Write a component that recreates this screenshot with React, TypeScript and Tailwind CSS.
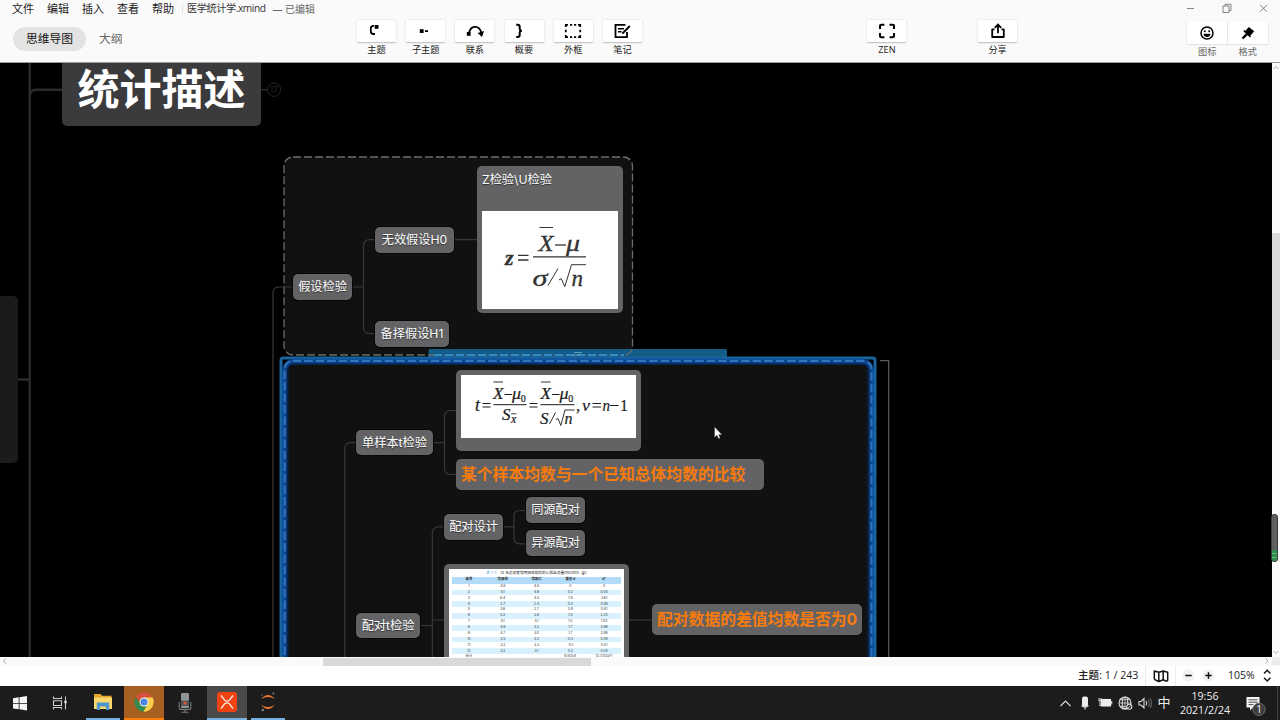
import type { ReactNode } from "react";

const menus = ["文件", "编辑", "插入", "查看", "帮助"];

const rows = [
  ["1", "4.8", "4.8", "0", "0"],
  ["2", "5.1", "4.9", "0.2", "0.04"],
  ["3", "6.4", "4.5", "1.9", "3.61"],
  ["4", "2.7", "2.4", "0.3", "0.09"],
  ["5", "3.6", "2.7", "0.9", "0.81"],
  ["6", "5.3", "3.8", "1.5", "2.25"],
  ["7", "5.1", "4.1", "1.0", "1.00"],
  ["8", "4.9", "3.2", "1.7", "2.89"],
  ["9", "4.7", "3.0", "1.7", "2.89"],
  ["10", "3.5", "3.2", "0.3", "0.09"],
  ["11", "3.2", "3.3", "-0.1", "0.01"],
  ["12", "3.3", "3.1", "0.2", "0.04"],
  ["合计", "", "", "9.5(Σd)", "12.73(Σd²)"],
];

function Tool({ label, children }: { label: string; children: ReactNode }) {
  return (
    <div className="flex w-[49.2px] shrink-0 flex-col items-center pt-[19.5px]">
      <div className="flex h-[22px] w-[39px] items-center justify-center rounded-[1px] bg-white shadow-[0_0.5px_1.5px_rgba(0,0,0,0.25)]">
        <svg width="20" height="20" viewBox="0 0 20 20" fill="none" stroke="#000" strokeWidth="1.8">
          {children}
        </svg>
      </div>
      <span className="mt-[2.5px] text-[9.2px] leading-[12px] whitespace-nowrap text-[#222]">{label}</span>
    </div>
  );
}

function Header() {
  return (
    <header className="flex h-[63px] shrink-0 border-b border-[#9a9a9a] bg-[#fafafa]">
      <div className="w-[351.9px] shrink-0">
        <div className="flex h-[18px] items-center pl-3 text-[11px] whitespace-nowrap text-[#1a1a1a]">
          {menus.map((m) => (
            <span key={m} className="w-[35px]">{m}</span>
          ))}
          <span className="-ml-[5px] h-[10px] w-px bg-[#e4e4e4]" />
          <span className="ml-[4px] text-[10.2px] tracking-[-0.45px] text-[#333]">医学统计学.xmind</span>
          <span className="ml-[7px] text-[10px] text-[#666]">— 已编辑</span>
        </div>
        <div className="mt-[9px] flex h-6 items-center pl-[13px] text-[11.8px]">
          <span className="flex h-6 w-[73px] items-center justify-center rounded-full bg-[#e3e3e3] text-[#111]">思维导图</span>
          <span className="ml-[13px] text-[#666]">大纲</span>
        </div>
      </div>
      <Tool label="主题">
        <path d="M8 4.8 H7.5 Q4.8 4.8 4.8 7.5 V10.3 Q4.8 13 7.5 13 H9" />
        <rect x="8.7" y="4" width="3.8" height="3.8" fill="#000" stroke="none" />
      </Tool>
      <Tool label="子主题">
        <rect x="3.8" y="8.2" width="3.8" height="3.8" fill="#000" stroke="none" />
        <path d="M9 10.1 h3" />
      </Tool>
      <Tool label="联系">
        <path d="M4 13 C5 3.8 14.5 3.8 16.3 12" />
        <rect x="1.8" y="11" width="3.8" height="3.8" fill="#000" stroke="none" />
        <path d="M12.6 12 L19 10 L17 16 Z" fill="#000" stroke="none" />
      </Tool>
      <Tool label="概要">
        <path d="M2.2 3.8 H3.7 Q5.7 3.8 5.7 5.8 V7.8 Q5.7 9.8 7.9 9.8 Q5.7 9.8 5.7 11.8 V14 Q5.7 16 3.7 16 H2.2" strokeWidth="2" />
      </Tool>
      <Tool label="外框">
        <path d="M2.8 6 V3.8 H5 M7 3.8 h2.2 M11 3.8 h2.2 M15 3.8 h2.2 V6 M17.2 8.7 v2.6 M17.2 14 V16.2 H15 M13.2 16.2 h-2.2 M9.2 16.2 h-2.2 M5 16.2 H2.8 V14 M2.8 11.3 V8.7" />
      </Tool>
      <Tool label="笔记">
        <path d="M13.5 3.8 H3.5 V16.2 H15 V11" />
        <path d="M6 7.7 h6 M6 10.8 h3.5" strokeWidth="1.4" />
        <path d="M10.3 12.6 L17.8 5" strokeWidth="2" />
      </Tool>
      <div className="w-[215.3px] shrink-0" />
      <Tool label="ZEN">
        <path d="M3 8 V5 Q3 3.8 4.2 3.8 H7.4 M12.6 3.8 H15.8 Q17 3.8 17 5 V8 M17 12 V15 Q17 16.2 15.8 16.2 H12.6 M7.4 16.2 H4.2 Q3 16.2 3 15 V12" strokeWidth="2.1" />
      </Tool>
      <div className="w-[61.5px] shrink-0" />
      <Tool label="分享">
        <path d="M6.5 8.3 H4.2 V16 H15.8 V8.3 H13.5" strokeLinejoin="round" />
        <path d="M10 12.2 V3.8 M6.8 6.8 L10 3.5 L13.2 6.8" />
      </Tool>
      <div className="ml-auto flex w-[96px] shrink-0 flex-col pl-[3px]">
        <svg width="90" height="18" viewBox="1187 0 90 18" fill="none" stroke="#777" strokeWidth="0.9">
          <path d="M1186 8.5 h8" />
          <path d="M1223 6 h6 v6.5 h-6 z M1225 6 V4.3 h6 v6.3 h-2" />
          <path d="M1260 4.8 l7 7 M1267 4.8 l-7 7" />
        </svg>
        <div className="mt-[4px] flex h-[21.5px] w-[81px] divide-x divide-[#e8e8e8] bg-white shadow-[0_0.5px_1.5px_rgba(0,0,0,0.25)]">
          <div className="flex flex-1 items-center justify-center">
            <svg width="14" height="14" viewBox="0 0 14 14" fill="none" stroke="#000" strokeWidth="1.5">
              <circle cx="7" cy="7" r="6" />
              <circle cx="4.8" cy="5.2" r="1" fill="#000" stroke="none" />
              <circle cx="9.2" cy="5.2" r="1" fill="#000" stroke="none" />
              <path d="M3.5 7.7 h7 Q10 11 7 11 Q4 11 3.5 7.7z" fill="#000" stroke="none" />
            </svg>
          </div>
          <div className="flex flex-1 items-center justify-center">
            <svg width="14" height="14" viewBox="0 0 14 14">
              <path d="M7.8 1 L13.2 5.3 L8.6 10.4 L3.6 5.7 Z" />
              <path d="M2.2 5 L3.3 4 L10 10.2 L9 11.4 Z" />
              <path d="M4.8 7.5 L6.6 9.2 L2.3 13.2 L0.7 11.8 Z" />
            </svg>
          </div>
        </div>
        <div className="mt-[2.5px] flex w-[81px] text-center text-[9.2px] leading-[12px] text-[#666]">
          <span className="flex-1">图标</span>
          <span className="flex-1">格式</span>
        </div>
      </div>
    </header>
  );
}

function Node({ at, children }: { at: string; children?: ReactNode }) {
  return (
    <div className={"absolute flex items-center justify-center rounded-[5px] bg-[#636365] pt-px text-[12.2px] whitespace-nowrap text-white shadow-[0_0_0_1px_#080808] [text-shadow:0_1px_1px_rgba(0,0,0,0.5)] " + at}>
      {children}
    </div>
  );
}

function Connectors() {
  return (
    <svg className="absolute inset-0" width="1272" height="594" viewBox="0 63 1272 594" fill="none">
      <g stroke="#2b2b2b" strokeWidth="2.4">
        <path d="M29.7 63 V657 M29.7 97 Q29.7 89.7 36 89.7 H62 M18 379.5 H30" />
      </g>
      <path d="M261 89.7 H267" stroke="#2b2b2b" strokeWidth="1.5" />
      <circle cx="274" cy="89.7" r="6.7" stroke="#262626" strokeWidth="1" />
      <text x="274" y="93" fontSize="8.5" textAnchor="middle" fill="#262626">17</text>
      <rect x="284" y="157" width="348.5" height="198" rx="9" fill="#111" />
      <path d="M428.5 358 V351 Q428.5 349 430.5 349 H725 Q727 349 727 351 V358 Z" fill="#145c88" />
      <rect x="284" y="157" width="348.5" height="198" rx="9" stroke="#6c6c6c" strokeWidth="1.3" strokeDasharray="8 3" />
      <path d="M434 355 H624" stroke="#145c88" strokeWidth="1.6" />
      <path d="M434 355 H624" stroke="#3d9bd8" strokeWidth="1.3" strokeDasharray="8 3" />
      <path d="M574 352.5 h8 M573 355 h8" stroke="#6fa9c9" strokeWidth="0.8" />

      <rect x="281" y="358" width="594" height="340" rx="2.5" fill="#000" stroke="#1b659c" strokeWidth="3" />
      <rect x="284.7" y="361.3" width="586.6" height="340" rx="9" fill="#111" stroke="#0b4186" strokeWidth="5" />
      <path d="M293 359.2 H864 M283 369 V657 M873.2 369 V657" stroke="#0d55a4" strokeWidth="1.5" />
      <rect x="284.7" y="361" width="586.8" height="340" rx="8" stroke="#3474bd" strokeWidth="1.9" strokeDasharray="8.5 3" />
      <path d="M288 657 V370 Q288 364.3 294 364.3 H862 Q868 364.3 868 370 V657" stroke="#07234f" strokeWidth="1.2" />
      <path d="M880 360.7 H888.7 V657" stroke="#5c5c5c" strokeWidth="1.2" />

      <g stroke="#393939" strokeWidth="1.2">
        <path d="M273 657 V294 Q273 287 279 287 H293" />
        <path d="M352 287 H363.5 M375 239.7 H370 Q363.5 239.7 363.5 246 V327 Q363.5 333.5 370 333.5 H375 M453 239.7 H477" />
        <path d="M356 442.7 H351 Q344.7 442.7 344.7 449 V657" />
        <path d="M433 442.7 H444.5 M456 410.5 H451 Q444.5 410.5 444.5 417 V468 Q444.5 474.5 451 474.5 H456" />
        <path d="M444 526.8 H439 Q432.3 526.8 432.3 533 V657 M420 625.5 H432.3 M432.3 620 H444" />
        <path d="M503 526.8 H514 M526 510.5 H520 Q514 510.5 514 516 V538 Q514 543.8 520 543.8 H526" />
        <path d="M629 620 H652" />
      </g>
    </svg>
  );
}

function Glyph({ x, y, size, w, upright, children }: { x: number; y: number; size: number; w: number; upright?: boolean; children: string }) {
  return (
    <text x={x} y={y} fontSize={size} textLength={w} lengthAdjust="spacingAndGlyphs" fontStyle={upright ? "normal" : "italic"}>
      {children}
    </text>
  );
}

function ZFormula() {
  return (
    <svg width="136" height="98" viewBox="482 211 136 98" fontFamily="Liberation Serif, serif" fill="#333" stroke="#333" strokeWidth="0.3">
      <text x="505" y="265" fontSize="22" fontWeight="bold" fontStyle="italic">z</text>
      <path d="M518 255.3 h10.5 M518 260 h10.5" strokeWidth="1.3" />
      <path d="M539.5 227.5 h13.5" strokeWidth="1" />
      <Glyph x={538.5} y={251} size={23} w={15}>X</Glyph>
      <path d="M555 245 h11" strokeWidth="1.3" />
      <Glyph x={566} y={251} size={23} w={14}>μ</Glyph>
      <path d="M533 256.8 h53" strokeWidth="1.3" />
      <Glyph x={532.5} y={285.5} size={24} w={15}>σ</Glyph>
      <path d="M548 285.5 L558 268.5" strokeWidth="1" />
      <path d="M559 280 l2.2 -1.5 3.6 8.2 6.7 -22 h14.5" fill="none" strokeWidth="1" />
      <text x="571.5" y="285.5" fontSize="23" fontStyle="italic">n</text>
    </svg>
  );
}

function TFormula() {
  return (
    <svg width="175" height="63" viewBox="461 375 175 63" fontFamily="Liberation Serif, serif" fill="#1c1c1c" stroke="#1c1c1c" strokeWidth="0.2">
      <text x="475" y="410.5" fontSize="18" fontStyle="italic">t</text>
      <path d="M482.5 403.5 h8 M482.5 407 h8 M529.5 403.5 h8 M529.5 407 h8 M592.5 403.5 h8.5 M592.5 407 h8.5" strokeWidth="1.1" />
      <path d="M493.5 382 h9.5 M541 382 h9.5" strokeWidth="0.9" />
      <Glyph x={493} y={399} size={17} w={10.5}>X</Glyph>
      <path d="M504.5 394.5 h7.5 M552 394.5 h7.5 M610 405.5 h8.5" strokeWidth="1.1" />
      <Glyph x={512} y={399} size={16} w={9}>μ</Glyph>
      <Glyph x={520.7} y={401.5} size={10} w={5} upright>0</Glyph>
      <path d="M493.5 404.7 h33 M540.5 404.7 h34" strokeWidth="1" />
      <Glyph x={502} y={420.3} size={16} w={8.5}>S</Glyph>
      <path d="M511 413.8 h5.5" strokeWidth="0.8" />
      <Glyph x={510.5} y={423} size={9} w={6}>X</Glyph>
      <Glyph x={540.5} y={399} size={17} w={10.5}>X</Glyph>
      <Glyph x={559.5} y={399} size={16} w={9}>μ</Glyph>
      <Glyph x={568.2} y={401.5} size={10} w={5} upright>0</Glyph>
      <Glyph x={540} y={424} size={16.5} w={8.5}>S</Glyph>
      <path d="M549.5 424 L555.5 412.5" strokeWidth="0.9" />
      <path d="M556 419.5 l2 -1 2.8 7 4.2 -15.5 h9.5" fill="none" strokeWidth="0.9" />
      <Glyph x={564.5} y={423.5} size={16.5} w={8}>n</Glyph>
      <text x="576" y="410.5" fontSize="17">,</text>
      <Glyph x={582} y={410.5} size={17} w={8}>ν</Glyph>
      <Glyph x={602.5} y={410.5} size={17} w={7.5}>n</Glyph>
      <Glyph x={620} y={410.5} size={17} w={8} upright>1</Glyph>
    </svg>
  );
}

function DataTable() {
  return (
    <div className="flex h-[95px] w-[175px] flex-col overflow-hidden bg-white px-[3px] pt-px text-[3.4px] text-[#333]">
      <div className="flex h-[6.5px] shrink-0 items-center justify-center gap-1 text-[3.7px] leading-none text-[#222]">
        <span className="text-[#3aa0e0]">表 7-1</span>
        <span>12 名运动者饮用咖啡前后的心肌血流量[ml/(min · g)]</span>
      </div>
      <div className="grid h-[7.2px] shrink-0 grid-cols-5 items-center bg-[#b2dcf8] text-center leading-none font-bold text-[#333]">
        <span>编号</span><span>饮用前</span><span>饮用后</span><span>差值 d</span><span>d²</span>
      </div>
      {rows.map((r) => (
        <div key={r[0]} className="grid h-[5.88px] shrink-0 grid-cols-5 items-center text-center leading-none odd:bg-white even:bg-[#d9f1fc]">
          {r.map((c, i) => (
            <span key={i}>{c}</span>
          ))}
        </div>
      ))}
    </div>
  );
}

function Canvas() {
  return (
    <main className="relative h-full w-[1272px] shrink-0 overflow-hidden bg-black font-[Inter,'Noto_Sans_CJK_SC',sans-serif]">
      <Connectors />
      <div className="absolute top-[233px] left-0 h-[167px] w-[18px] rounded-r-[5px] bg-[#1b1b1d]" />
      <div className="absolute top-[-12px] left-[62px] flex h-[75px] w-[199px] items-center justify-center rounded-[5px] bg-[#3b3b3d] pt-[3px] text-[42px] leading-none font-bold text-white">
        统计描述
      </div>
      <Node at="left-[293px] top-[211px] h-[26px] w-[59px]">假设检验</Node>
      <Node at="left-[375px] top-[164px] h-[26px] w-[79px]">无效假设H0</Node>
      <Node at="left-[375px] top-[258px] h-[26px] w-[74px]">备择假设H1</Node>
      <div className="absolute top-[103px] left-[477px] flex h-[147px] w-[146px] flex-col rounded-[5px] bg-[#636365] px-[5px] text-[12.2px] text-white">
        <span className="flex h-[45px] pt-[5px] leading-[18px] [text-shadow:0_1px_1px_rgba(0,0,0,0.5)]">Z检验\U检验</span>
        <div className="bg-white"><ZFormula /></div>
      </div>
      <Node at="left-[356px] top-[367px] h-[25px] w-[77px]">单样本t检验</Node>
      <div className="absolute top-[307px] left-[456px] h-[81px] w-[185px] rounded-[5px] bg-[#636365] p-[5px]">
        <div className="h-[63px] bg-white"><TFormula /></div>
      </div>
      <div className="absolute top-[396px] left-[456px] flex h-[31px] w-[308px] items-center rounded-[5px] bg-[#636365] pl-[5px] text-[15.8px] font-bold whitespace-nowrap text-[#f87b0c]">
        某个样本均数与一个已知总体均数的比较
      </div>
      <Node at="left-[444px] top-[451px] h-[26px] w-[59px]">配对设计</Node>
      <Node at="left-[526px] top-[434px] h-[26px] w-[59px]">同源配对</Node>
      <Node at="left-[526px] top-[467px] h-[26px] w-[59px]">异源配对</Node>
      <Node at="left-[356px] top-[550px] h-[25px] w-[64px]">配对t检验</Node>
      <div className="absolute top-[501px] left-[444px] h-[110px] w-[185px] rounded-[5px] bg-[#636365] p-[5px]">
        <DataTable />
      </div>
      <div className="absolute top-[541px] left-[652px] flex h-[31px] w-[210px] items-center rounded-[5px] bg-[#636365] pl-[5px] text-[15.8px] font-bold whitespace-nowrap text-[#f87b0c]">
        配对数据的差值均数是否为0
      </div>
      <svg className="absolute top-[363px] left-[713px]" width="10" height="14" viewBox="0 0 10 14">
        <path d="M1.5 0.8 V11.5 L4 9.3 L5.5 12.7 L7.2 12 L5.8 8.7 H9 Z" fill="#fff" stroke="#222" strokeWidth="0.4" />
      </svg>
    </main>
  );
}

function StatusBar() {
  return (
    <>
      <div className="flex h-[9px] shrink-0 items-center bg-[#fafafa]">
        <svg width="323" height="9" viewBox="0 0 323 9" fill="none" stroke="#aaa"><path d="M6 1.5 L3.3 4 L6 6.5" /></svg>
        <div className="h-[8px] w-[268px] bg-[#d9d9d9]" />
        <svg className="ml-auto" width="20" height="9" viewBox="0 0 20 9" fill="none" stroke="#aaa">
          <rect x="12" y="0" width="8" height="8" fill="#ececec" stroke="none" />
          <path d="M5.5 1.5 L8 4 L5.5 6.5" />
        </svg>
      </div>
      <div className="flex h-5 shrink-0 items-center justify-end bg-white text-[11px] font-medium text-[#222]">
        <span className="w-[67px] text-[10.6px] whitespace-nowrap">主题: 1 / 243</span>
        <div className="flex h-full w-[31px] items-center justify-center border-x border-[#ececec]">
          <svg width="16" height="14" viewBox="0 0 16 14" fill="none" stroke="#111" strokeWidth="1.5" strokeLinejoin="round">
            <path d="M1.3 2 L5.8 3.2 L10.2 2 L14.7 3.2 V10.8 Q14.5 12.5 12.8 12 L10.2 10.8 L5.8 12.5 L3 11.3 Q1.3 10.8 1.3 9.2 Z M5.8 3.2 V12.5 M10.2 2 V10.8" />
          </svg>
        </div>
        <svg width="52" height="20" viewBox="1176 666 52 20" stroke="#111" strokeWidth="1.5">
          <circle cx="1188.5" cy="675.5" r="6" fill="#f1f1f1" stroke="none" />
          <circle cx="1208.5" cy="675.5" r="6" fill="#f1f1f1" stroke="none" />
          <path d="M1185.3 675.5 h6.4 M1205.3 675.5 h6.4 M1208.5 672.3 v6.4" />
        </svg>
        <span className="w-[33px] text-[10.5px]">105%</span>
        <svg width="19" height="20" viewBox="1261 666 19 20" fill="none" stroke="#111" strokeWidth="1.4">
          <path d="M1264 673.5 l3.2 -3.2 3.2 3.2 M1264 677.8 l3.2 3.2 3.2 -3.2" />
        </svg>
      </div>
    </>
  );
}

function Taskbar() {
  return (
    <footer className="flex h-[34px] shrink-0 items-stretch bg-[#1c1c1c]">
      <div className="flex w-10 items-center justify-center">
        <svg width="16" height="16" viewBox="0 0 16 16" fill="#f4f4f4">
          <path d="M1 3.2 L6.7 2.3 V8 H1Z M7.5 2.2 L15 1 V8 H7.5Z M1 8.7 H6.7 V14.2 L1 13.4Z M7.5 8.7 H15 V15.4 L7.5 14.3Z" />
        </svg>
      </div>
      <div className="flex w-10 items-center justify-center">
        <svg width="16" height="14" viewBox="0 0 16 14" fill="none" stroke="#ccc" strokeWidth="1.1">
          <path d="M1.5 0.5 V2.5 H9.5 V0.5 M1.5 4.7 h8 v4.8 h-8z M1.5 13.5 V11.5 H9.5 V13.5 M13.5 0.5 V13.5" />
          <rect x="12.3" y="4.8" width="2.4" height="2.4" fill="#ddd" stroke="none" />
        </svg>
      </div>
      <div className="ml-[6px] flex w-[34px] items-center justify-center border-b-2 border-[#78b0df]">
        <svg width="20" height="18" viewBox="0 0 20 18">
          <path d="M1 1.5 Q1 1 1.5 1 H7.5 L9 2.8 H18.5 V16 H1Z" fill="#e3a82c" />
          <path d="M1 4.5 H19 V16 H1Z" fill="#fbd76d" />
          <path d="M3.8 9.5 H16.2 V17 H13 V13.5 H7 V17 H3.8Z" fill="#4c98cd" />
        </svg>
      </div>
      <div className="ml-1 flex w-10 items-center justify-center border-b-2 border-[#ff7c08] bg-[#a75f22]">
        <svg width="20" height="20" viewBox="0 0 20 20">
          <path d="M10 10 L1.7 5.2 A9.6 9.6 0 0 1 18.3 5.2Z" fill="#d94f3d" />
          <path d="M10 10 L18.3 5.2 A9.6 9.6 0 0 1 10 19.6Z" fill="#f8cf4c" />
          <path d="M18.3 5.4 H10 L13.8 12 L9.5 19.5 A9.6 9.6 0 0 0 18.3 5.4Z" fill="#f8cf4c" />
          <path d="M1.7 5.2 L6.2 12.2 L10 14.3 L13 13.3 L9.5 19.6 A9.6 9.6 0 0 1 1.7 5.2Z" fill="#348b50" />
          <circle cx="10" cy="10" r="4.5" fill="#f5f5f5" />
          <circle cx="10" cy="10" r="3.5" fill="#4a86e0" />
        </svg>
      </div>
      <div className="flex w-[43px] items-center justify-center pr-[1px]">
        <svg width="14" height="22" viewBox="0 0 14 22" fill="none">
          <rect x="3" y="1" width="8" height="15" rx="1.2" fill="#8e949a" />
          <rect x="3" y="8.5" width="8" height="5.5" fill="#55565a" />
          <circle cx="7" cy="11.2" r="1.4" fill="#e65b2c" />
          <path d="M1.2 10 V16.2 Q1.2 17.4 2.4 17.4 H11.6 Q12.8 17.4 12.8 16.2 V10 M7 17 V20 M3.5 20.3 H10.5" stroke="#777a7e" strokeWidth="1.1" />
        </svg>
      </div>
      <div className="flex w-10 items-center justify-center border-b-2 border-[#78b0df] bg-[#4a4a4a]">
        <svg width="20" height="20" viewBox="0 0 20 20" fill="none">
          <rect width="20" height="20" rx="3" fill="#f04312" />
          <path d="M4 3.5 L7.5 8 Q10 10.3 12.5 8 L16 3.5 M4 16.5 L7.5 12 Q10 9.7 12.5 12 L16 16.5" stroke="#ffe9df" strokeWidth="1.3" />
        </svg>
      </div>
      <div className="ml-1 flex w-[34px] items-center justify-center border-b-2 border-[#78b0df]">
        <svg width="18" height="20" viewBox="0 0 18 20">
          <path d="M2 7.2 Q9 -1.2 16 7.2 Q9 2.6 2 7.2Z M2 12.8 Q9 21.2 16 12.8 Q9 17.4 2 12.8Z" fill="#e8762c" />
          <circle cx="14.3" cy="1.5" r="1" fill="#777" />
          <circle cx="3.8" cy="18" r="1.2" fill="#888" />
          <circle cx="2.8" cy="3" r="0.7" fill="#777" />
        </svg>
      </div>
      <div className="ml-auto flex w-[225px] items-center text-[#f0f0f0]">
        <svg width="100" height="34" viewBox="1055 686 100 34" fill="none" stroke="#ddd" strokeWidth="1.1">
          <path d="M1060.5 706 l5 -5 5 5" />
          <rect x="1082" y="696.5" width="6" height="10" rx="2" fill="#eee" stroke="none" />
          <path d="M1081.5 705.5 Q1085 708.8 1088.5 705.5 M1085 706 V709.5" />
          <rect x="1101.5" y="699.5" width="9" height="6.5" fill="#eee" stroke="#eee" />
          <path d="M1111.7 701 v3.5 M1099 698 v3 M1101 698 v3 M1098.5 700.5 h3 M1100 701 v4.5 h2" />
          <circle cx="1125" cy="703" r="6" />
          <ellipse cx="1125" cy="703" rx="2.8" ry="6" />
          <path d="M1119 703 h12 M1120 699.7 h10 M1120 706.3 h6 M1125 697 v12" strokeWidth="0.8" />
          <circle cx="1129.3" cy="706.8" r="2.5" fill="#1c1c1c" />
          <path d="M1127.8 708.3 l3 -3" strokeWidth="0.9" />
          <path d="M1139 701.5 h2 l3 -3 v9.5 l-3 -3 h-2z M1146 701 q1.5 2.2 0 4.4" />
          <path d="M1148 699.5 q2.5 3.7 0 7.2 M1150 698 q3 5 0 10" stroke="#666" />
        </svg>
        <span className="w-[18px] text-center text-[13px]">中</span>
        <div className="flex w-[64px] flex-col items-center text-[10.6px] leading-[14px]">
          <span>19:56</span>
          <span>2021/2/24</span>
        </div>
        <svg className="ml-auto" width="43" height="34" viewBox="1237 686 43 34">
          <path d="M1246.5 697 H1259.5 V707.5 H1253 L1250 710.5 V707.5 H1246.5Z" fill="#f5f5f5" />
          <path d="M1248.5 699.8 h9 M1248.5 702.2 h9 M1248.5 704.6 h5" stroke="#222" strokeWidth="0.8" />
          <circle cx="1259" cy="709.3" r="6.2" fill="#3e3e3e" stroke="#777" strokeWidth="0.8" />
          <text x="1259" y="713" fontSize="10" textAnchor="middle" fill="#fff">1</text>
          <path d="M1277.5 686 V720" stroke="#444" />
        </svg>
      </div>
    </footer>
  );
}

export default function App() {
  return (
    <div className="relative flex h-[720px] w-[1280px] flex-col overflow-hidden bg-white font-['Open_Sans','Noto_Sans_CJK_SC',sans-serif]">
      <Header />
      <div className="flex h-[594px] shrink-0">
        <Canvas />
        <div className="flex w-2 flex-col justify-between bg-[#fafafa]">
          <svg width="8" height="10" viewBox="0 0 8 10" fill="none" stroke="#aaa"><path d="M1.5 6 L4 3.5 L6.5 6" /></svg>
          <div className="mt-[160px] mb-auto h-[127px] w-2 bg-[#d9d9d9]" />
          <svg width="8" height="10" viewBox="0 0 8 10" fill="none" stroke="#aaa"><path d="M1.5 4 L4 6.5 L6.5 4" /></svg>
        </div>
      </div>
      <StatusBar />
      <Taskbar />
      <div className="absolute top-[514px] left-[1271px] flex h-12 w-[7px] flex-col justify-end overflow-hidden rounded-[3px] border border-[#3c3c3c] bg-[#606060]">
        <div className="flex h-[11px] flex-col justify-evenly bg-[#2f8c4c]">
          <div className="h-px bg-[#62bd7c]" />
          <div className="h-px bg-[#62bd7c]" />
        </div>
      </div>
    </div>
  );
}
